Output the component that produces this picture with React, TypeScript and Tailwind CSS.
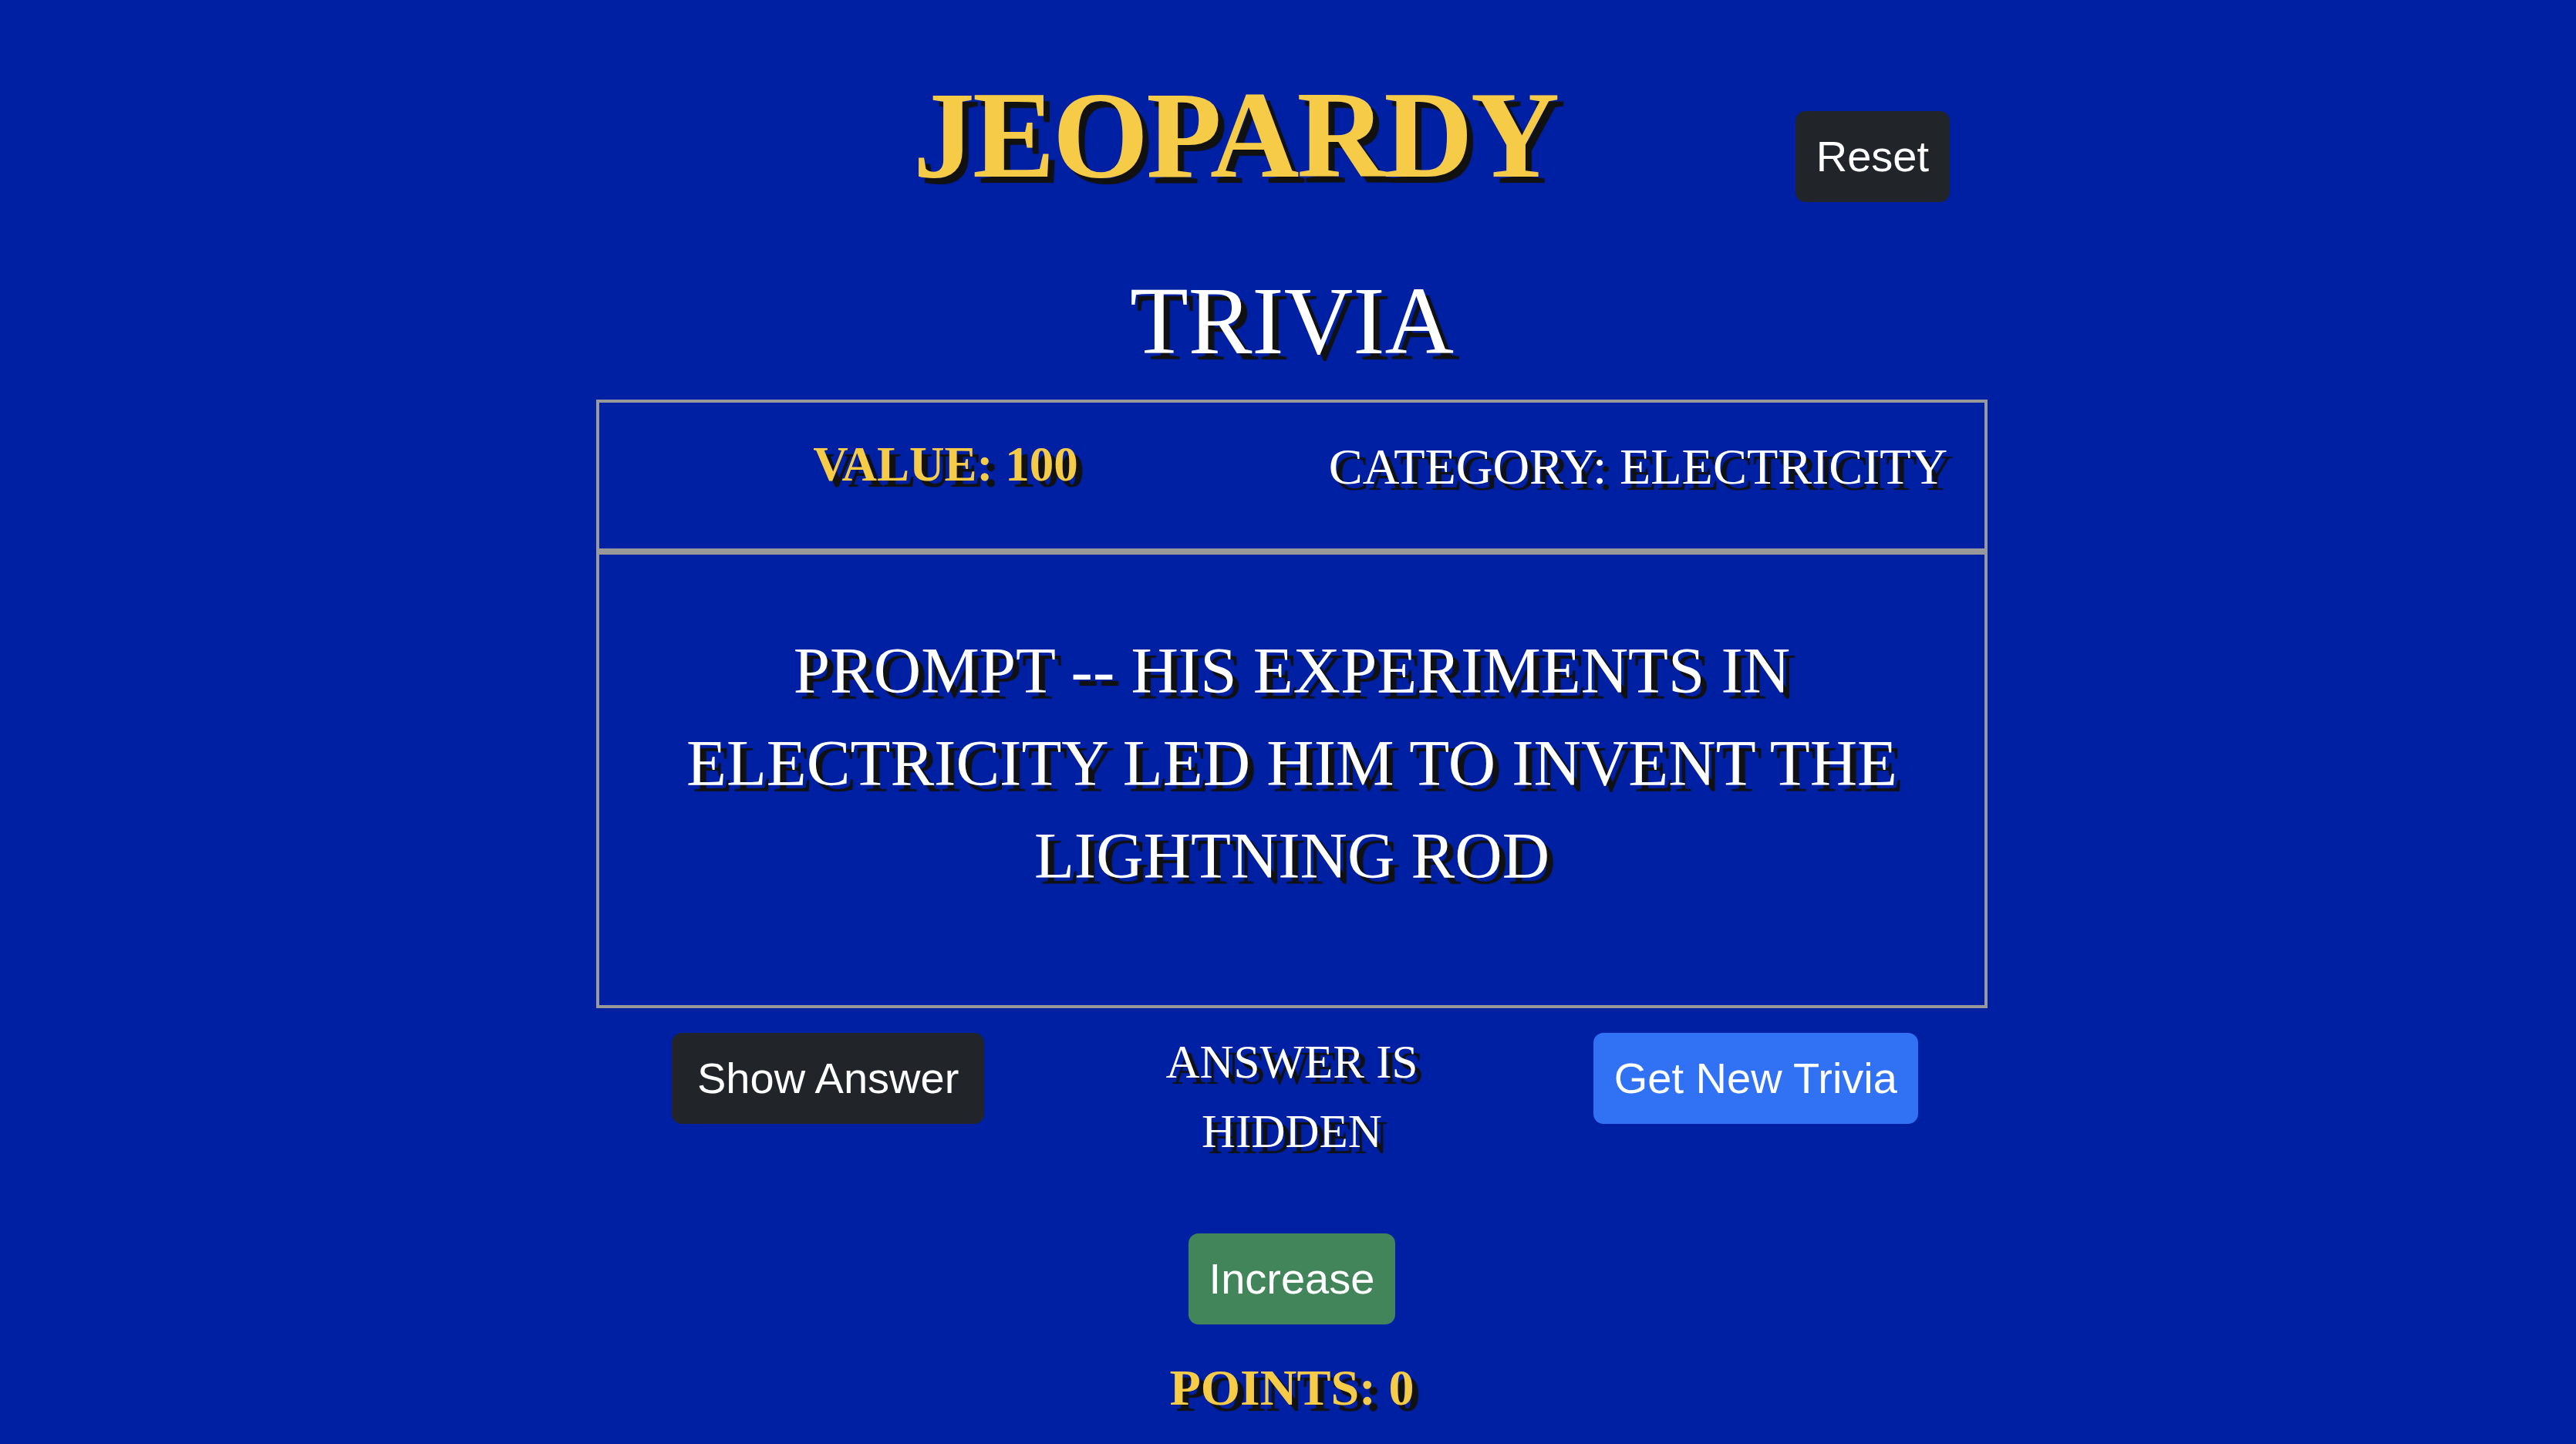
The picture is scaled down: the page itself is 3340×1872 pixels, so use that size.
import React from "react";

export default function App() {
  return (
    <div className="min-h-screen bg-[#0020a3] pl-[10px] pt-[79px] pb-[20px] font-['Liberation_Serif','Times_New_Roman',serif]">
      <div className="w-[1804px] mx-auto">
        {/* Header row */}
        <div className="flex items-start">
          <h1 className="ml-[411px] text-[160px] leading-[1.2] tracking-[-3px] font-bold text-[#f6cb47] [text-shadow:8px_8px_1px_#111]">
            JEOPARDY
          </h1>
          <button className="ml-auto mr-[49px] mt-[65px] rounded-[13px] bg-[#212529] px-[27px] py-[17px] text-[56px] leading-[84px] text-white font-['Liberation_Sans',Arial,sans-serif]">
            Reset
          </button>
        </div>

        {/* Title */}
        <h2 className="mt-[72px] text-center text-[124px] leading-[1.2] text-white [text-shadow:8px_8px_1px_#111]">
          TRIVIA
        </h2>

        {/* Value / category box */}
        <div className="mt-[26px] border-4 border-[#999] h-[197px] grid grid-cols-2 pt-[43px]">
          <div className="text-center text-[63px] leading-[1.2] font-bold text-[#f6cb47] [text-shadow:8px_8px_1px_#111]">
            VALUE: 100
          </div>
          <div className="text-center text-[66px] leading-[1.2] text-white [text-shadow:8px_8px_1px_#111]">
            CATEGORY: ELECTRICITY
          </div>
        </div>

        {/* Prompt box */}
        <div className="border-4 border-[#999] h-[592px] px-[80px] pt-[90px]">
          <p className="text-center text-[85px] leading-[120px] text-white [text-shadow:8px_8px_1px_#111]">
            PROMPT -- HIS EXPERIMENTS IN ELECTRICITY LED HIM TO INVENT THE LIGHTNING ROD
          </p>
        </div>

        {/* Controls row */}
        <div className="mt-[25px] grid grid-cols-3 items-start">
          <div className="flex justify-center">
            <button className="mt-[7px] rounded-[13px] bg-[#212529] px-[33px] py-[17px] text-[56px] leading-[84px] text-white font-['Liberation_Sans',Arial,sans-serif]">
              Show Answer
            </button>
          </div>
          <div className="flex justify-center">
            <p className="w-[400px] text-center text-[61px] leading-[90px] text-white [text-shadow:8px_8px_1px_#111]">
              ANSWER IS HIDDEN
            </p>
          </div>
          <div className="flex justify-center">
            <button className="mt-[7px] rounded-[13px] bg-[#3072f3] px-[27px] py-[17px] text-[56px] leading-[84px] text-white font-['Liberation_Sans',Arial,sans-serif]">
              Get New Trivia
            </button>
          </div>
        </div>

        {/* Increase */}
        <div className="mt-[87px] flex justify-center">
          <button className="rounded-[13px] bg-[#42855b] px-[27px] py-[17px] text-[56px] leading-[84px] text-white font-['Liberation_Sans',Arial,sans-serif]">
            Increase
          </button>
        </div>

        {/* Points */}
        <div className="mt-[42px] text-center text-[66px] leading-[1.2] font-bold text-[#f6cb47] [text-shadow:8px_8px_1px_#111]">
          POINTS: 0
        </div>
      </div>
    </div>
  );
}
